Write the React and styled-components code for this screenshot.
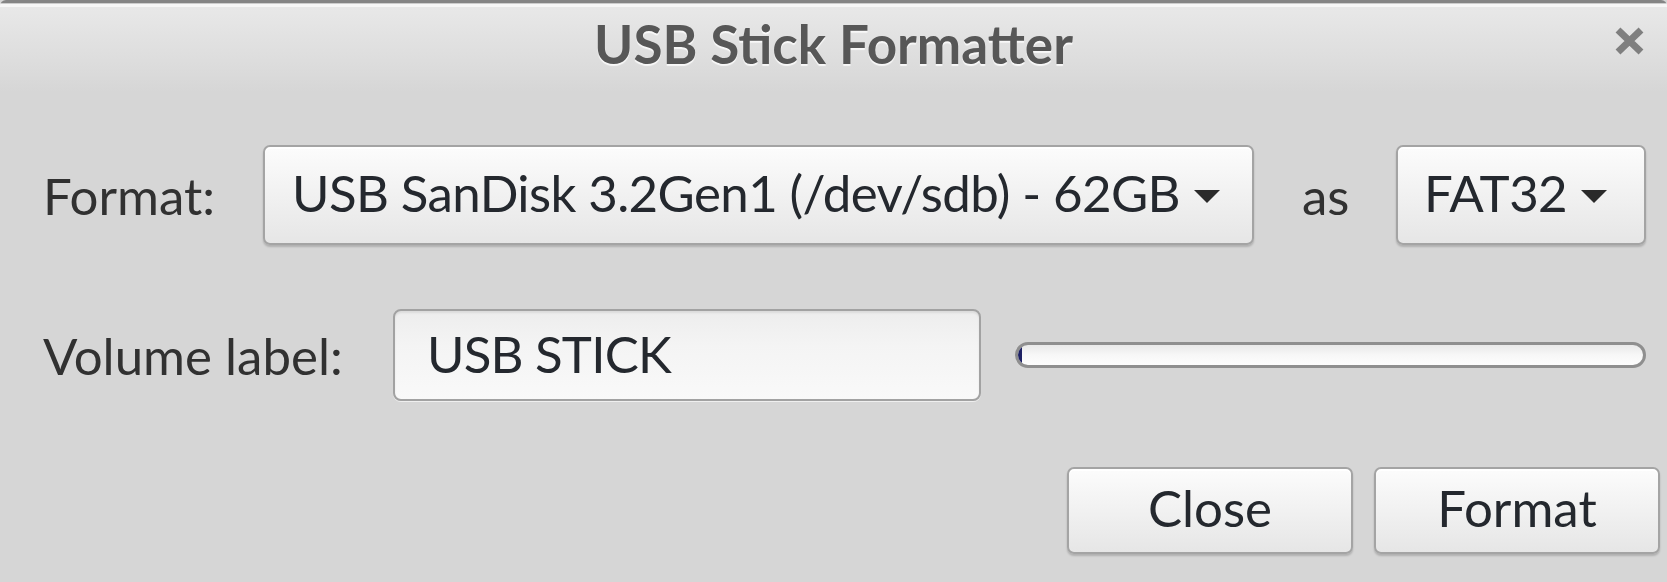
import React from "react";
import styled, { createGlobalStyle } from "styled-components";

const Global = createGlobalStyle`
  html, body { margin: 0; padding: 0; background: #d6d6d6; }
  body { font-family: Lato, "Noto Sans", sans-serif; }
  * { box-sizing: border-box; }
`;

const Window = styled.div`
  width: 1667px;
  height: 582px;
  overflow: hidden;
  background: #d6d6d6;
  display: flex;
  flex-direction: column;
  border-top-left-radius: 6px;
  border-top-right-radius: 6px;
`;

const TitleBar = styled.div`
  height: 92px;
  display: grid;
  grid-template-columns: 1fr auto 1fr;
  align-items: center;
  border-top: 3px solid #858585;
  box-shadow: inset 0 1px 0 #cdcdcd, inset 0 4px 0 #f7f7f7;
  background: linear-gradient(#e9e9e9 0%, #dcdcdc 70%, #d6d6d6 100%);
`;

const Title = styled.h1`
  grid-column: 2;
  margin: 0;
  font-family: Lato, "Noto Sans", sans-serif;
  font-weight: 700;
  font-size: 53px;
  line-height: 1;
  color: #575757;
  text-shadow: 0 2px 1px rgba(255, 255, 255, 0.8);
  padding-bottom: 8px;
`;

const CloseIcon = styled.button`
  grid-column: 3;
  justify-self: end;
  margin-right: 22px;
  margin-bottom: 14px;
  width: 32px;
  height: 30px;
  padding: 0;
  border: none;
  background: transparent;
  display: flex;
  align-items: center;
  justify-content: center;
`;

const Body = styled.div`
  flex: 1;
  display: flex;
  flex-direction: column;
  padding: 53px 7px 0 43px;
`;

const Form = styled.div`
  display: flex;
  flex-direction: column;
  gap: 64px;
  padding-right: 14px;
`;

const Row = styled.div`
  display: flex;
  align-items: center;
  gap: ${(p) => p.$gap ?? 48}px;
`;

const Label = styled.span`
  width: ${(p) => p.$w}px;
  flex: none;
  font-size: 51px;
  line-height: 1;
  color: #313131;
  white-space: nowrap;
`;

const Combo = styled.button`
  flex: ${(p) => (p.$grow ? "1 1 0" : "none")};
  min-width: 0;
  width: ${(p) => (p.$w ? `${p.$w}px` : "auto")};
  height: 100px;
  display: flex;
  align-items: center;
  justify-content: space-between;
  gap: 14px;
  padding: 0 ${(p) => p.$padRight ?? 36}px 6px ${(p) => p.$padLeft ?? 27}px;
  border: 2px solid #a4a4a4;
  border-radius: 7px;
  background: linear-gradient(#fcfcfc 0%, #f1f1f1 50%, #e6e6e6 100%);
  box-shadow: inset 0 2px 0 #ffffff, 0 2px 2px rgba(0, 0, 0, 0.18);
  font-family: Lato, "Noto Sans", sans-serif;
  font-size: 51px;
  letter-spacing: -0.6px;
  line-height: 1;
  color: #24282e;
  white-space: nowrap;
`;

const Arrow = styled.span`
  width: 0;
  height: 0;
  border-left: 13px solid transparent;
  border-right: 13px solid transparent;
  border-top: 13px solid #2a2a2a;
  margin-top: 8px;
  flex: none;
`;

const Entry = styled.div`
  width: 588px;
  flex: none;
  height: 92px;
  display: flex;
  align-items: center;
  padding: 0 0 4px 32px;
  border: 2px solid #a2a2a2;
  border-radius: 8px;
  background: linear-gradient(#ededed 0%, #f4f4f4 40%, #f9f9f9 100%);
  box-shadow: inset 0 2px 2px rgba(0, 0, 0, 0.08), 0 1px 0 rgba(255, 255, 255, 0.6);
  font-size: 51px;
  letter-spacing: -0.8px;
  line-height: 1;
  color: #24282e;
`;

const Trough = styled.div`
  flex: 1;
  height: 26px;
  border: 3px solid #8f8f8f;
  border-radius: 13px;
  background: linear-gradient(#e9e9e9 0%, #f7f7f7 50%, #fdfdfd 100%);
  overflow: hidden;
  display: flex;
`;

const Fill = styled.div`
  height: 100%;
  background: #1d2063;
  border-radius: 3px 0 0 3px;
`;

const Actions = styled.div`
  display: flex;
  justify-content: flex-end;
  gap: 21px;
  margin-top: 66px;
`;

const Button = styled.button`
  width: 286px;
  height: 87px;
  padding: 0 0 6px 0;
  border: 2px solid #a4a4a4;
  border-radius: 7px;
  background: linear-gradient(#fcfcfc 0%, #f1f1f1 50%, #e6e6e6 100%);
  box-shadow: inset 0 2px 0 #ffffff, 0 2px 2px rgba(0, 0, 0, 0.18);
  font-family: Lato, "Noto Sans", sans-serif;
  font-size: 51px;
  line-height: 1;
  color: #24282e;
`;

export default function App() {
  const progress = 0.6;
  return (
    <>
      <Global />
      <Window>
        <TitleBar>
          <Title>USB Stick Formatter</Title>
          <CloseIcon aria-label="Close">
            <svg width="31" height="28" viewBox="0 0 31 28">
              <path d="M4 3 L27 25 M27 3 L4 25" stroke="#7f7f7f" strokeWidth="7" strokeLinecap="butt" />
            </svg>
          </CloseIcon>
        </TitleBar>
        <Body>
          <Form>
            <Row>
              <Label $w={172}>Format:</Label>
              <Combo $grow>
                USB SanDisk 3.2Gen1 (/dev/sdb) - 62GB
                <Arrow />
              </Combo>
              <Label $w={46}>as</Label>
              <Combo $w={250} $padLeft={26} $padRight={38}>
                FAT32
                <Arrow />
              </Combo>
            </Row>
            <Row $gap={34}>
              <Label $w={316}>Volume label:</Label>
              <Entry>USB STICK</Entry>
              <Trough>
                <Fill style={{ width: `${progress}%` }} />
              </Trough>
            </Row>
          </Form>
          <Actions>
            <Button>Close</Button>
            <Button>Format</Button>
          </Actions>
        </Body>
      </Window>
    </>
  );
}
